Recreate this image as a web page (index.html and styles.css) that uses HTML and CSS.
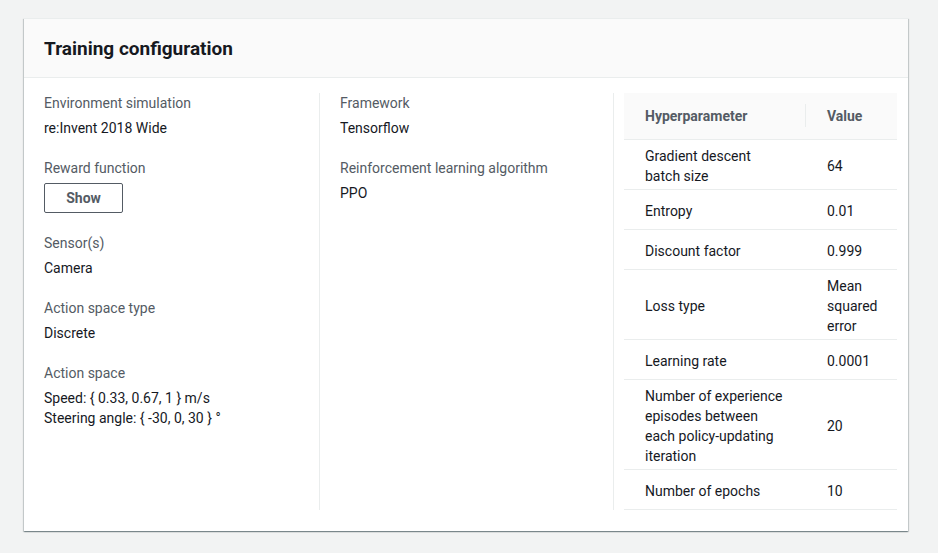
FILE: index.html
```html
<!DOCTYPE html>
<html>
<head>
<meta charset="utf-8">
<link rel="stylesheet" href="styles.css">
</head>
<body>
<div class="card">
  <div class="card-header"><h2 class="title">Training configuration</h2></div>
  <div class="card-body">
    <div class="col col-first">
      <div class="field">
        <div class="label">Environment simulation</div>
        <div class="value">re:Invent 2018 Wide</div>
      </div>
      <div class="field">
        <div class="label">Reward function</div>
        <div class="value"><button class="btn">Show</button></div>
      </div>
      <div class="field">
        <div class="label">Sensor(s)</div>
        <div class="value">Camera</div>
      </div>
      <div class="field">
        <div class="label">Action space type</div>
        <div class="value">Discrete</div>
      </div>
      <div class="field">
        <div class="label">Action space</div>
        <div class="value">Speed: { 0.33, 0.67, 1 } m/s<br>Steering angle: { -30, 0, 30 } °</div>
      </div>
    </div>
    <div class="col col-mid">
      <div class="field">
        <div class="label">Framework</div>
        <div class="value">Tensorflow</div>
      </div>
      <div class="field">
        <div class="label">Reinforcement learning algorithm</div>
        <div class="value">PPO</div>
      </div>
    </div>
    <div class="col col-table">
      <table class="hp">
        <colgroup><col class="c-name"><col class="c-val"></colgroup>
        <thead>
          <tr><th class="th-name"><span>Hyperparameter</span></th><th class="th-val">Value</th></tr>
        </thead>
        <tbody>
          <tr><td>Gradient descent batch size</td><td>64</td></tr>
          <tr><td>Entropy</td><td>0.01</td></tr>
          <tr><td>Discount factor</td><td>0.999</td></tr>
          <tr><td>Loss type</td><td>Mean squared error</td></tr>
          <tr><td>Learning rate</td><td>0.0001</td></tr>
          <tr><td>Number of experience episodes between each policy-updating iteration</td><td>20</td></tr>
          <tr><td>Number of epochs</td><td>10</td></tr>
        </tbody>
      </table>
    </div>
  </div>
</div>
</body>
</html>
```

FILE: styles.css
```css
html, body {
  margin: 0;
  padding: 0;
}
body {
  background: #f2f3f3;
  font-family: Roboto, "Liberation Sans", sans-serif;
  font-size: 14px;
  line-height: 20px;
  color: #16191f;
  padding: 18px 30px 22px 24px;
}
.card {
  background: #fff;
  box-shadow: 0 1px 1px 0 rgba(0,28,36,.3), 1px 1px 1px 0 rgba(0,28,36,.15), -1px 1px 1px 0 rgba(0,28,36,.15);
  border-top: 1px solid #eaeded;
}
.card-header {
  background: #fafafa;
  border-bottom: 1px solid #eaeded;
  padding: 19px 20px 18px;
}
.title {
  margin: 0;
  font-size: 19px;
  line-height: 21px;
  font-weight: 700;
  color: #16191f;
}
.card-body {
  display: flex;
  padding: 15px 11px 21px 20px;
}
.col {
  box-sizing: border-box;
}
.col-first {
  width: 276px;
  border-right: 1px solid #eaeded;
}
.col-mid {
  width: 294px;
  padding-left: 20px;
  border-right: 1px solid #eaeded;
}
.col-table {
  flex: 1;
  padding-left: 10px;
}
.field {
  margin-bottom: 20px;
}
.label {
  color: #545b64;
  margin-bottom: 5px;
}
.value {
  color: #16191f;
}
.btn {
  font-family: inherit;
  font-size: 14px;
  font-weight: 700;
  line-height: 20px;
  color: #545b64;
  background: #fff;
  border: 1px solid #545b64;
  border-radius: 2px;
  padding: 4px 20px;
  width: 79px;
  height: 30px;
  box-sizing: border-box;
}
.hp {
  border-collapse: collapse;
  table-layout: fixed;
  width: 273px;
}
.c-name { width: 182px; }
.c-val { width: 91px; }
.hp th {
  background: #fafafa;
  color: #545b64;
  font-weight: 700;
  text-align: left;
  padding: 13px 20px 13px 21px;
  border-bottom: 1px solid #eaeded;
}
.hp th.th-name {
  position: relative;
}
.hp th.th-name::after {
  content: "";
  position: absolute;
  right: 0;
  top: 11px;
  bottom: 12px;
  width: 1px;
  background: #eaeded;
}
.hp tbody tr {
  height: 40px;
}
.hp td {
  padding: 6px 20px 3px 21px;
  border-bottom: 1px solid #eaeded;
  vertical-align: middle;
}
```
